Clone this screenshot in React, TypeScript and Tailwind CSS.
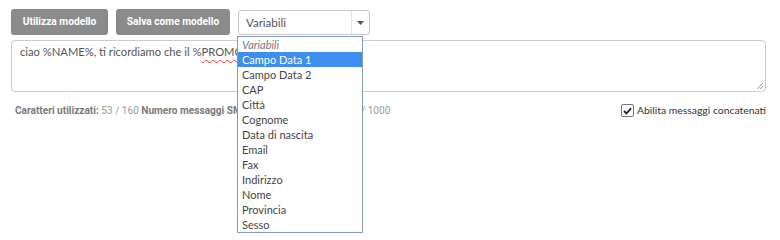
import React from "react";

const items = [
  "Campo Data 1",
  "Campo Data 2",
  "CAP",
  "Città",
  "Cognome",
  "Data di nascita",
  "Email",
  "Fax",
  "Indirizzo",
  "Nome",
  "Provincia",
  "Sesso",
];

export default function App() {
  return (
    <div className="relative w-[780px] h-[240px] bg-white overflow-hidden pl-[11px] pt-[9px]" style={{ fontFamily: "Roboto, sans-serif" }}>
      <div className="flex items-start gap-[8px]">
        <button className="h-[26px] w-[97px] rounded-[3px] bg-[#8b8b8b] text-white text-[10.2px] font-bold flex items-center justify-center" style={{ fontFamily: "Roboto, sans-serif" }}>
          Utilizza modello
        </button>
        <button className="h-[26px] w-[114px] rounded-[3px] bg-[#8b8b8b] text-white text-[10.2px] font-bold flex items-center justify-center">
          Salva come modello
        </button>
        <div className="relative mt-[1px] h-[25px] w-[132px] rounded-[3px] border border-[#c8c8c8] flex items-center text-[11.5px] text-[#555]" style={{ fontFamily: "Lato, sans-serif" }}>
          <span className="pl-[7px] flex-1">Variabili</span>
          <div className="w-[18px] h-full border-l border-[#e2e2e2] flex items-center justify-center">
            <svg width="7" height="4" viewBox="0 0 7 4"><path d="M0 0 L7 0 L3.5 4 Z" fill="#555" /></svg>
          </div>
        </div>
      </div>

      <div className="relative mt-[5px] h-[52px] w-[755px] rounded-[4px] border border-[#cccccc] px-[8px] pt-[3px] leading-[16px] text-[11.2px] text-[#555]" style={{ fontFamily: "Lato, sans-serif" }}>
        <span>ciao %NAME%, ti ricordiamo che il %</span>
        <span className="underline decoration-wavy decoration-[#e33] decoration-[1px] underline-offset-[3px]">PROMOTION</span>
        <span>% è attivo</span>
        <svg className="absolute right-[1px] bottom-[1px]" width="8" height="8" viewBox="0 0 8 8">
          <path d="M7 1 L1 7 M7 4 L4 7" stroke="#999" strokeWidth="1" />
        </svg>
      </div>

      <div className="mt-[11px] flex items-center w-[755px] text-[10.1px]">
        <div className="flex-1 whitespace-nowrap pl-[4px] flex">
          <span className="inline-block w-[346px] overflow-hidden">
            <span className="font-bold text-[#7a7a7a]">Caratteri utilizzati: </span>
            <span className="text-[#9a9a9a]">53 / 160 </span>
            <span className="font-bold text-[#7a7a7a]">Numero messaggi SMS: </span>
            <span className="text-[#9a9a9a]">1 </span>
            <span className="font-bold text-[#7a7a7a]">Credito: </span>
            <span className="text-[#9a9a9a]">999</span>
          </span>
          <span className="text-[#9a9a9a]">/ 1000</span>
        </div>
        <label className="flex items-center gap-[3px] text-[#333] whitespace-nowrap text-[10.4px]" style={{ fontFamily: "Lato, sans-serif" }}>
          <span className="w-[13px] h-[13px] rounded-[2px] border border-[#767676] flex items-center justify-center bg-white">
            <svg width="9" height="8" viewBox="0 0 9 8"><path d="M1 4 L3.5 6.5 L8 1.2" stroke="#222" strokeWidth="1.8" fill="none" /></svg>
          </span>
          <span>Abilita messaggi concatenati</span>
        </label>
      </div>

      <div className="absolute left-[237px] top-[36px] w-[126px] border border-[#7f9db9] bg-white text-[11px] text-[#444]" style={{ fontFamily: "Lato, sans-serif" }}>
        <div className="h-[15px] leading-[15px] px-[4px] italic text-[#777]">Variabili</div>
        {items.map((it, i) => (
          <div key={it} className={i === 0 ? "h-[15px] leading-[15px] px-[4px] bg-[#3d8ef0] text-white" : "h-[15px] leading-[15px] px-[4px]"}>
            {it}
          </div>
        ))}
      </div>
    </div>
  );
}
